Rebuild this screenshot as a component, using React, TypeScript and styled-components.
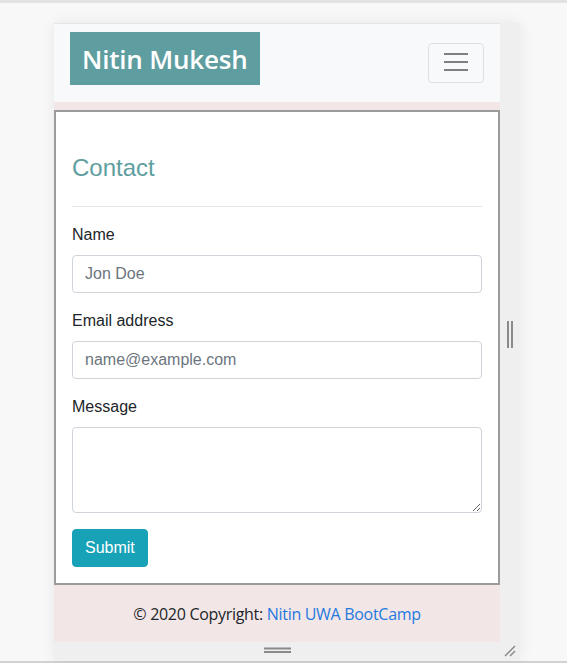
import React, { FC } from "react";
import styled, { createGlobalStyle } from "styled-components";

const colors = {
  cadet: "#5f9ea0",
  blush: "#f3e6e6",
  navbar: "#f8f9fa",
  ink: "#212529",
  muted: "#6c757d",
  field: "#ced4da",
  info: "#17a2b8",
  link: "#1f7ae0",
  chrome: "#efefef",
  grip: "#8a8a8a",
};

const GlobalStyle = createGlobalStyle`
  html, body {
    margin: 0;
    background: #f8f8f8;
    font-family: "Open Sans", "Noto Sans", sans-serif;
  }
  * {
    box-sizing: border-box;
  }
`;

const Grip: FC<{ vertical?: boolean }> = ({ vertical }) =>
  vertical ? (
    <svg width="8" height="27" viewBox="0 0 8 27">
      <rect x="1" y="0" width="2" height="27" fill={colors.grip} />
      <rect x="5" y="0" width="2" height="27" fill={colors.grip} />
    </svg>
  ) : (
    <svg width="27" height="6" viewBox="0 0 27 6">
      <rect x="0" y="0.5" width="27" height="2" fill={colors.grip} />
      <rect x="0" y="4" width="27" height="2" fill={colors.grip} />
    </svg>
  );

const App: FC = () => {
  return (
    <>
      <GlobalStyle />
      <Ruler />
      <Stage>
        <Frame>
          <Viewport>
            <Navbar>
              <Brand>Nitin Mukesh</Brand>
              <Toggler aria-label="Toggle navigation">
                <svg width="24" height="24" viewBox="0 0 24 24">
                  <path
                    d="M0 3h24M0 11h24M0 19h24"
                    stroke="#7f7f7f"
                    strokeWidth="2"
                  />
                </svg>
              </Toggler>
            </Navbar>
            <Main>
              <Heading>Contact</Heading>
              <Rule />
              <form onSubmit={(e) => e.preventDefault()}>
                <Group>
                  <Label>Name</Label>
                  <Input type="text" placeholder="Jon Doe" />
                </Group>
                <Group>
                  <Label>Email address</Label>
                  <Input type="email" placeholder="name@example.com" />
                </Group>
                <Group>
                  <Label>Message</Label>
                  <TextArea rows={3} />
                </Group>
                <SubmitButton type="submit">Submit</SubmitButton>
              </form>
            </Main>
            <Footer>
              © 2020 Copyright: <FooterLink href="#">Nitin UWA BootCamp</FooterLink>
            </Footer>
          </Viewport>
          <SideHandle>
            <Grip vertical />
          </SideHandle>
          <BottomHandle>
            <Grip />
          </BottomHandle>
          <Corner>
            <svg width="12" height="12" viewBox="0 0 12 12">
              <path d="M1 11L11 1M6 11L11 6" stroke={colors.grip} strokeWidth="1.5" />
            </svg>
          </Corner>
        </Frame>
      </Stage>
      <BottomRule />
    </>
  );
};

export default App;

const Ruler = styled.div`
  height: 3px;
  background: #e2e2e2;
`;

const Stage = styled.div`
  display: flex;
  padding: 20px 0 0 54px;
`;

const Frame = styled.div`
  display: grid;
  grid-template-columns: 446px 20px;
  grid-template-rows: 619px 18px;
  background: ${colors.chrome};
  box-shadow: 0 0 14px rgba(0, 0, 0, 0.07);
`;

const Viewport = styled.div`
  display: flex;
  flex-direction: column;
  background: ${colors.blush};
  border-top: 1px solid #e6e6e6;
  overflow: hidden;
`;

const Navbar = styled.nav`
  display: flex;
  justify-content: space-between;
  align-items: flex-start;
  padding: 8px 16px 17px;
  background: ${colors.navbar};
  margin-bottom: 8px;
`;

const Brand = styled.a`
  display: flex;
  align-items: center;
  height: 53px;
  padding: 0 12px;
  background: ${colors.cadet};
  color: #fff;
  font-family: "Open Sans", sans-serif;
  font-weight: 600;
  font-size: 26px;
  letter-spacing: -0.2px;
`;

const Toggler = styled.button`
  align-self: center;
  display: flex;
  align-items: center;
  justify-content: center;
  width: 56px;
  height: 40px;
  margin-top: 9px;
  background: transparent;
  border: 1px solid rgba(0, 0, 0, 0.1);
  border-radius: 4px;
  padding: 0;
`;

const Main = styled.main`
  background: #fff;
  border: 2px solid #9b9b9b;
  padding: 16px;
  font-family: "Liberation Sans", Arial, sans-serif;
  color: ${colors.ink};
`;

const Heading = styled.h3`
  margin: 26px 0 0;
  font-size: 24px;
  font-weight: 400;
  line-height: 1.2;
  color: ${colors.cadet};
`;

const Rule = styled.hr`
  margin: 23px 0 16px;
  border: 0;
  border-top: 1px solid rgba(0, 0, 0, 0.1);
`;

const Group = styled.div`
  margin-bottom: 16px;
`;

const Label = styled.label`
  display: block;
  margin-bottom: 8px;
  font-size: 16px;
  line-height: 24px;
`;

const fieldBase = `
  display: block;
  width: 100%;
  padding: 6px 12px;
  font-family: "Liberation Sans", Arial, sans-serif;
  font-size: 16px;
  line-height: 24px;
  color: #495057;
  background: #fff;
  border: 1px solid #ced4da;
  border-radius: 4px;
  &::placeholder {
    color: #6c757d;
  }
`;

const Input = styled.input`
  ${fieldBase}
  height: 38px;
`;

const TextArea = styled.textarea`
  ${fieldBase}
  height: 86px;
`;

const SubmitButton = styled.button`
  height: 38px;
  padding: 0 12px;
  background: ${colors.info};
  color: #fff;
  border: 1px solid ${colors.info};
  border-radius: 4px;
  font-family: "Liberation Sans", Arial, sans-serif;
  font-size: 16px;
`;

const Footer = styled.footer`
  flex: 1;
  margin-top: 1px;
  padding: 16px;
  text-align: center;
  font-size: 16px;
  line-height: 24px;
  color: ${colors.ink};
  letter-spacing: -0.3px;
`;

const FooterLink = styled.a`
  color: ${colors.link};
  text-decoration: none;
`;

const SideHandle = styled.div`
  display: flex;
  align-items: center;
  justify-content: center;
  padding-top: 4px;
`;

const BottomHandle = styled.div`
  display: flex;
  align-items: center;
  justify-content: center;
  padding-bottom: 2px;
`;

const Corner = styled.div`
  display: flex;
  align-items: flex-end;
  justify-content: flex-start;
  padding: 0 0 3px 4px;
`;

const BottomRule = styled.div`
  height: 2px;
  margin-top: 1px;
  background: #d2d2d2;
`;
